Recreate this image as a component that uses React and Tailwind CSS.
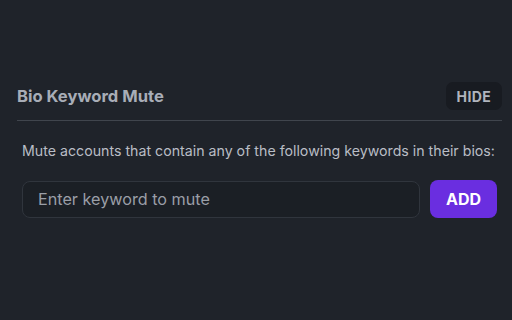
import React, { useState } from 'react';

const App = () => {
  const [keyword, setKeyword] = useState('');

  return (
    <div
      className="w-[512px] h-[320px] bg-[#1f232a] overflow-hidden"
      style={{ fontFamily: 'Inter, "Noto Sans", sans-serif' }}
    >
      <div className="pt-[82px] px-[17px] pr-[10px]">
        {/* Header */}
        <div className="flex items-center justify-between h-[28px] mb-[10px]">
          <h2 className="text-[16.6px] font-bold text-[#a8adb7]">Bio Keyword Mute</h2>
          <button className="h-[28px] px-[11px] rounded-[7px] bg-[#181b21] text-[14px] font-bold text-[#b0b4bd] tracking-wide">
            HIDE
          </button>
        </div>
        <div className="h-px bg-[#40454d]" />

        {/* Body */}
        <div className="pl-[5px] pr-[5px] pt-[20px]">
          <p className="text-[14.2px] text-[#b9bdc5] leading-[20px] whitespace-nowrap">
            Mute accounts that contain any of the following keywords in their bios:
          </p>
          <div className="flex items-center gap-[10px] mt-[19px]">
            <input
              value={keyword}
              onChange={(e) => setKeyword(e.target.value)}
              placeholder="Enter keyword to mute"
              className="flex-1 h-[37px] rounded-[8px] border border-[#30353d] bg-[#1b1f25] px-[15px] text-[16.2px] text-[#d1d5db] placeholder:text-[#9a9ea7] outline-none"
            />
            <button className="w-[67px] h-[38px] rounded-[8px] bg-[#6a2ee0] text-white text-[16px] font-bold">
              ADD
            </button>
          </div>
        </div>
      </div>
    </div>
  );
};

export default App;
